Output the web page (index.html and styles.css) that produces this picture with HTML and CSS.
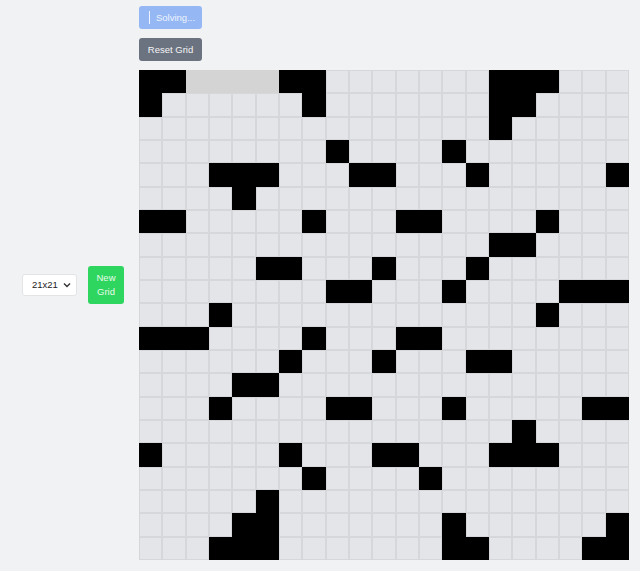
FILE: index.html
```html
<!DOCTYPE html>
<html lang="en">
<head>
<meta charset="utf-8">
<title>Crossword Grid</title>
<link rel="stylesheet" href="styles.css">
</head>
<body>
<div class="controls">
  <select class="size">
    <option>21x21</option>
  </select>
  <button class="btn btn-new">New<br>Grid</button>
</div>
<div class="main">
  <button class="btn btn-solving" disabled><span class="spinner"></span>Solving...</button>
  <button class="btn btn-reset">Reset Grid</button>
  <div class="grid">
<span class="x"></span><span class="x"></span><span class="h"></span><span class="h"></span><span class="h"></span><span class="h"></span><span class="x"></span><span class="x"></span><span class="o"></span><span class="o"></span><span class="o"></span><span class="o"></span><span class="o"></span><span class="o"></span><span class="o"></span><span class="x"></span><span class="x"></span><span class="x"></span><span class="o"></span><span class="o"></span><span class="o"></span>
<span class="x"></span><span class="o"></span><span class="o"></span><span class="o"></span><span class="o"></span><span class="o"></span><span class="o"></span><span class="x"></span><span class="o"></span><span class="o"></span><span class="o"></span><span class="o"></span><span class="o"></span><span class="o"></span><span class="o"></span><span class="x"></span><span class="x"></span><span class="o"></span><span class="o"></span><span class="o"></span><span class="o"></span>
<span class="o"></span><span class="o"></span><span class="o"></span><span class="o"></span><span class="o"></span><span class="o"></span><span class="o"></span><span class="o"></span><span class="o"></span><span class="o"></span><span class="o"></span><span class="o"></span><span class="o"></span><span class="o"></span><span class="o"></span><span class="x"></span><span class="o"></span><span class="o"></span><span class="o"></span><span class="o"></span><span class="o"></span>
<span class="o"></span><span class="o"></span><span class="o"></span><span class="o"></span><span class="o"></span><span class="o"></span><span class="o"></span><span class="o"></span><span class="x"></span><span class="o"></span><span class="o"></span><span class="o"></span><span class="o"></span><span class="x"></span><span class="o"></span><span class="o"></span><span class="o"></span><span class="o"></span><span class="o"></span><span class="o"></span><span class="o"></span>
<span class="o"></span><span class="o"></span><span class="o"></span><span class="x"></span><span class="x"></span><span class="x"></span><span class="o"></span><span class="o"></span><span class="o"></span><span class="x"></span><span class="x"></span><span class="o"></span><span class="o"></span><span class="o"></span><span class="x"></span><span class="o"></span><span class="o"></span><span class="o"></span><span class="o"></span><span class="o"></span><span class="x"></span>
<span class="o"></span><span class="o"></span><span class="o"></span><span class="o"></span><span class="x"></span><span class="o"></span><span class="o"></span><span class="o"></span><span class="o"></span><span class="o"></span><span class="o"></span><span class="o"></span><span class="o"></span><span class="o"></span><span class="o"></span><span class="o"></span><span class="o"></span><span class="o"></span><span class="o"></span><span class="o"></span><span class="o"></span>
<span class="x"></span><span class="x"></span><span class="o"></span><span class="o"></span><span class="o"></span><span class="o"></span><span class="o"></span><span class="x"></span><span class="o"></span><span class="o"></span><span class="o"></span><span class="x"></span><span class="x"></span><span class="o"></span><span class="o"></span><span class="o"></span><span class="o"></span><span class="x"></span><span class="o"></span><span class="o"></span><span class="o"></span>
<span class="o"></span><span class="o"></span><span class="o"></span><span class="o"></span><span class="o"></span><span class="o"></span><span class="o"></span><span class="o"></span><span class="o"></span><span class="o"></span><span class="o"></span><span class="o"></span><span class="o"></span><span class="o"></span><span class="o"></span><span class="x"></span><span class="x"></span><span class="o"></span><span class="o"></span><span class="o"></span><span class="o"></span>
<span class="o"></span><span class="o"></span><span class="o"></span><span class="o"></span><span class="o"></span><span class="x"></span><span class="x"></span><span class="o"></span><span class="o"></span><span class="o"></span><span class="x"></span><span class="o"></span><span class="o"></span><span class="o"></span><span class="x"></span><span class="o"></span><span class="o"></span><span class="o"></span><span class="o"></span><span class="o"></span><span class="o"></span>
<span class="o"></span><span class="o"></span><span class="o"></span><span class="o"></span><span class="o"></span><span class="o"></span><span class="o"></span><span class="o"></span><span class="x"></span><span class="x"></span><span class="o"></span><span class="o"></span><span class="o"></span><span class="x"></span><span class="o"></span><span class="o"></span><span class="o"></span><span class="o"></span><span class="x"></span><span class="x"></span><span class="x"></span>
<span class="o"></span><span class="o"></span><span class="o"></span><span class="x"></span><span class="o"></span><span class="o"></span><span class="o"></span><span class="o"></span><span class="o"></span><span class="o"></span><span class="o"></span><span class="o"></span><span class="o"></span><span class="o"></span><span class="o"></span><span class="o"></span><span class="o"></span><span class="x"></span><span class="o"></span><span class="o"></span><span class="o"></span>
<span class="x"></span><span class="x"></span><span class="x"></span><span class="o"></span><span class="o"></span><span class="o"></span><span class="o"></span><span class="x"></span><span class="o"></span><span class="o"></span><span class="o"></span><span class="x"></span><span class="x"></span><span class="o"></span><span class="o"></span><span class="o"></span><span class="o"></span><span class="o"></span><span class="o"></span><span class="o"></span><span class="o"></span>
<span class="o"></span><span class="o"></span><span class="o"></span><span class="o"></span><span class="o"></span><span class="o"></span><span class="x"></span><span class="o"></span><span class="o"></span><span class="o"></span><span class="x"></span><span class="o"></span><span class="o"></span><span class="o"></span><span class="x"></span><span class="x"></span><span class="o"></span><span class="o"></span><span class="o"></span><span class="o"></span><span class="o"></span>
<span class="o"></span><span class="o"></span><span class="o"></span><span class="o"></span><span class="x"></span><span class="x"></span><span class="o"></span><span class="o"></span><span class="o"></span><span class="o"></span><span class="o"></span><span class="o"></span><span class="o"></span><span class="o"></span><span class="o"></span><span class="o"></span><span class="o"></span><span class="o"></span><span class="o"></span><span class="o"></span><span class="o"></span>
<span class="o"></span><span class="o"></span><span class="o"></span><span class="x"></span><span class="o"></span><span class="o"></span><span class="o"></span><span class="o"></span><span class="x"></span><span class="x"></span><span class="o"></span><span class="o"></span><span class="o"></span><span class="x"></span><span class="o"></span><span class="o"></span><span class="o"></span><span class="o"></span><span class="o"></span><span class="x"></span><span class="x"></span>
<span class="o"></span><span class="o"></span><span class="o"></span><span class="o"></span><span class="o"></span><span class="o"></span><span class="o"></span><span class="o"></span><span class="o"></span><span class="o"></span><span class="o"></span><span class="o"></span><span class="o"></span><span class="o"></span><span class="o"></span><span class="o"></span><span class="x"></span><span class="o"></span><span class="o"></span><span class="o"></span><span class="o"></span>
<span class="x"></span><span class="o"></span><span class="o"></span><span class="o"></span><span class="o"></span><span class="o"></span><span class="x"></span><span class="o"></span><span class="o"></span><span class="o"></span><span class="x"></span><span class="x"></span><span class="o"></span><span class="o"></span><span class="o"></span><span class="x"></span><span class="x"></span><span class="x"></span><span class="o"></span><span class="o"></span><span class="o"></span>
<span class="o"></span><span class="o"></span><span class="o"></span><span class="o"></span><span class="o"></span><span class="o"></span><span class="o"></span><span class="x"></span><span class="o"></span><span class="o"></span><span class="o"></span><span class="o"></span><span class="x"></span><span class="o"></span><span class="o"></span><span class="o"></span><span class="o"></span><span class="o"></span><span class="o"></span><span class="o"></span><span class="o"></span>
<span class="o"></span><span class="o"></span><span class="o"></span><span class="o"></span><span class="o"></span><span class="x"></span><span class="o"></span><span class="o"></span><span class="o"></span><span class="o"></span><span class="o"></span><span class="o"></span><span class="o"></span><span class="o"></span><span class="o"></span><span class="o"></span><span class="o"></span><span class="o"></span><span class="o"></span><span class="o"></span><span class="o"></span>
<span class="o"></span><span class="o"></span><span class="o"></span><span class="o"></span><span class="x"></span><span class="x"></span><span class="o"></span><span class="o"></span><span class="o"></span><span class="o"></span><span class="o"></span><span class="o"></span><span class="o"></span><span class="x"></span><span class="o"></span><span class="o"></span><span class="o"></span><span class="o"></span><span class="o"></span><span class="o"></span><span class="x"></span>
<span class="o"></span><span class="o"></span><span class="o"></span><span class="x"></span><span class="x"></span><span class="x"></span><span class="o"></span><span class="o"></span><span class="o"></span><span class="o"></span><span class="o"></span><span class="o"></span><span class="o"></span><span class="x"></span><span class="x"></span><span class="o"></span><span class="o"></span><span class="o"></span><span class="o"></span><span class="x"></span><span class="x"></span>
  </div>
</div>
</body>
</html>
```

FILE: styles.css
```css
html, body {
  margin: 0;
  padding: 0;
}

body {
  display: flex;
  align-items: center;
  height: 571px;
  background: #f1f2f3;
  font-family: "Liberation Sans", Arial, sans-serif;
  font-size: 9.5px;
}

.controls {
  display: flex;
  align-items: center;
  gap: 11px;
  margin-left: 22px;
  margin-top: -2px;
}

.size {
  -webkit-appearance: none;
  appearance: none;
  box-sizing: border-box;
  width: 55px;
  height: 22px;
  padding: 0 0 0 9px;
  font-family: inherit;
  font-size: 9.5px;
  color: #222;
  background-color: #fff;
  background-image: url("data:image/svg+xml,%3Csvg xmlns='http://www.w3.org/2000/svg' width='8' height='6' viewBox='0 0 8 6'%3E%3Cpath d='M1 1.5l3 3 3-3' fill='none' stroke='%23333' stroke-width='1.4'/%3E%3C/svg%3E");
  background-repeat: no-repeat;
  background-position: right 5px center;
  border: 1px solid #e3e4e6;
  border-radius: 3px;
}

.btn {
  font-family: inherit;
  font-size: 9.5px;
  border: none;
  border-radius: 3px;
  color: #fff;
  cursor: pointer;
}

.btn-new {
  width: 36px;
  height: 38px;
  padding: 0;
  line-height: 14px;
  background: #2ed55f;
  color: #e9fbe9;
}

.main {
  align-self: flex-start;
  display: flex;
  flex-direction: column;
  align-items: flex-start;
  gap: 9px;
  margin-left: 15px;
  padding-top: 6px;
}

.btn-solving {
  display: flex;
  align-items: center;
  width: 63px;
  height: 23px;
  padding: 0 0 0 10px;
  background: #95b8f4;
  color: #eef3fd;
}

.spinner {
  display: inline-block;
  width: 1px;
  height: 13px;
  margin-right: 6px;
  background: #eef3fd;
}

.btn-reset {
  width: 63px;
  height: 23px;
  padding: 0;
  background: #6b7280;
  color: #f5f5f5;
}

.grid {
  width: 490px;
  height: 490px;
  display: grid;
  grid-template-columns: repeat(21, 1fr);
  grid-template-rows: repeat(21, 1fr);
}

.grid span {
  box-sizing: border-box;
  border: 1px solid #d5d7da;
  background: #e3e5e8;
}

.grid .x {
  background: #000;
  border-color: #000;
}

.grid .h {
  background: #d4d4d4;
  border-color: #d4d4d4;
}
```
